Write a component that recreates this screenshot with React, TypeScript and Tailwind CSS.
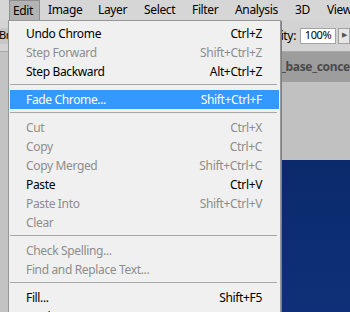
const menuBar = [
  { label: "Edit", w: "w-[31px]", active: true },
  { label: "Image", w: "w-[50px]" },
  { label: "Layer", w: "w-[46px]" },
  { label: "Select", w: "w-[48px]" },
  { label: "Filter", w: "w-[43px]" },
  { label: "Analysis", w: "w-[60px]" },
  { label: "3D", w: "w-[32px]" },
  { label: "View", w: "w-[50px]" },
];

type Item =
  | { sep: true }
  | { label: string; key?: string; off?: boolean; hot?: boolean; sep?: false };

const items: Item[] = [
  { label: "Undo Chrome", key: "Ctrl+Z" },
  { label: "Step Forward", key: "Shift+Ctrl+Z", off: true },
  { label: "Step Backward", key: "Alt+Ctrl+Z" },
  { sep: true },
  { label: "Fade Chrome...", key: "Shift+Ctrl+F", hot: true },
  { sep: true },
  { label: "Cut", key: "Ctrl+X", off: true },
  { label: "Copy", key: "Ctrl+C", off: true },
  { label: "Copy Merged", key: "Shift+Ctrl+C", off: true },
  { label: "Paste", key: "Ctrl+V" },
  { label: "Paste Into", key: "Shift+Ctrl+V", off: true },
  { label: "Clear", off: true },
  { sep: true },
  { label: "Check Spelling...", off: true },
  { label: "Find and Replace Text...", off: true },
  { sep: true },
  { label: "Fill...", key: "Shift+F5" },
  { label: "Stroke..." },
];

export default function App() {
  return (
    <div className="relative w-[350px] h-[312px] overflow-hidden bg-[#c2c2c2] flex flex-col font-['Noto_Sans',sans-serif] text-[12px] tracking-[-0.35px] text-black">
      {/* menu bar */}
      <div className="h-[20px] shrink-0 bg-[#d6d6d6] flex items-stretch pl-[9px]">
        {menuBar.map((m, i) => (
          <div
            key={m.label}
            className={`${m.w} ${i === 1 ? "ml-[4px]" : ""} shrink-0 flex items-center ${
              m.active ? "bg-[#b3b3b3] border border-[#8e8e8e] border-b-0 pl-[3px]" : "pl-[4px]"
            }`}
          >
            {m.label}
          </div>
        ))}
      </div>

      {/* options bar */}
      <div className="h-[32px] shrink-0 bg-[#d3d3d3] border-b border-[#a9a9a9] flex items-center">
        <div className="w-[8px] h-[16px] overflow-hidden bg-[#c7c7c7] flex items-center">
          <span className="ml-[-1px] text-[11px]">Br</span>
        </div>
        <div className="flex-1" />
        <span className="mr-[4px] text-[12px]">city:</span>
        <div className="w-[36px] h-[16px] bg-white border border-[#a3a3a3] flex items-center justify-center text-[11px]">
          100%
        </div>
        <div className="w-[12px] h-[16px] ml-[2px] bg-[#e6e6e6] border border-[#a3a3a3] flex items-center justify-center text-[7px] text-[#555]">
          ▶
        </div>
      </div>

      {/* workspace */}
      <div className="flex-1 flex">
        <div className="w-[8px] bg-[#c3c3c3]" />
        <div className="flex-1 flex flex-col">
          <div className="h-[30px] shrink-0 bg-[#9d9d9d] flex items-center justify-end overflow-hidden">
            <span className="w-[69px] font-bold text-[#4a4a4a] whitespace-nowrap overflow-hidden">_base_concept.psd</span>
          </div>
          <div className="h-[78px] shrink-0 bg-[#c1c1c1]" />
          <div className="flex-1 bg-gradient-to-b from-[#0b2a6c] to-[#0d3078]" />
        </div>
      </div>

      {/* Edit menu dropdown */}
      <div className="absolute left-[8px] top-[20px] w-[273px] bg-[#f0f0f0] border border-[#979797] pt-[3px] pb-[3px] shadow-[1px_1px_0_#7f7f7f]">
        {items.map((it, i) =>
          it.sep ? (
            <div key={i} className="h-[9px] pt-[3px] pl-[1px] pr-[3px]">
              <div className="border-t border-[#a7a7a7]" />
            </div>
          ) : (
            <div
              key={i}
              className={`h-[19px] mx-[1px] flex items-center justify-between pl-[16px] pr-[17px] ${
                it.hot ? "bg-[#3399ff] text-white" : it.off ? "text-[#8d8d8d]" : "text-black"
              }`}
            >
              <span>{it.label}</span>
              {it.key && <span>{it.key}</span>}
            </div>
          )
        )}
      </div>
    </div>
  );
}
